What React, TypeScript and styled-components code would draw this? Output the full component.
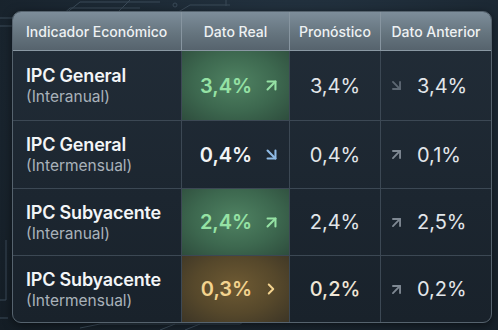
import styled, { createGlobalStyle } from 'styled-components';
import { ArrowUpRight, ArrowDownRight, ChevronRight } from 'lucide-react';

type Tone = 'green' | 'blue' | 'yellow' | 'plain';

interface Row {
  title: string;
  sub: string;
  real: string;
  realTone: Tone;
  realIcon: 'up' | 'down' | 'chev';
  forecast: string;
  prevIcon: 'up' | 'down';
  prev: string;
}

const rows: Row[] = [
  { title: 'IPC General', sub: '(Interanual)', real: '3,4%', realTone: 'green', realIcon: 'up', forecast: '3,4%', prevIcon: 'down', prev: '3,4%' },
  { title: 'IPC General', sub: '(Intermensual)', real: '0,4%', realTone: 'blue', realIcon: 'down', forecast: '0,4%', prevIcon: 'up', prev: '0,1%' },
  { title: 'IPC Subyacente', sub: '(Interanual)', real: '2,4%', realTone: 'green', realIcon: 'up', forecast: '2,4%', prevIcon: 'up', prev: '2,5%' },
  { title: 'IPC Subyacente', sub: '(Intermensual)', real: '0,3%', realTone: 'yellow', realIcon: 'chev', forecast: '0,2%', prevIcon: 'up', prev: '0,2%' },
];

const toneText: Record<Tone, string> = {
  green: '#95e2a4',
  blue: '#f2f4f6',
  yellow: '#f3d38f',
  plain: '#e4e8ec',
};

const toneIcon: Record<Tone, string> = {
  green: '#95e2a4',
  blue: '#8fbbe6',
  yellow: '#f3d38f',
  plain: '#e4e8ec',
};

const toneBg: Record<Tone, string> = {
  green: 'radial-gradient(ellipse at 50% 45%, #4f8262 0%, #3d684f 55%, #2e4d3d 100%)',
  blue: 'transparent',
  yellow: 'radial-gradient(ellipse at 50% 45%, #6e5a33 0%, #56482b 55%, #3c3526 100%)',
  plain: 'transparent',
};

const App = () => {
  return (
    <>
      <GlobalStyle />
      <Page>
        <Circuit width="498" height="330" viewBox="0 0 498 330">
          <g stroke="#3a4a58" strokeWidth="1" fill="none">
            <path d="M0 18 L60 18 L80 2 L160 2" />
            <path d="M0 26 L50 26 L70 8 L140 8" />
            <path d="M118 12 L130 0" />
            <path d="M120 14 L175 14 L190 5 L230 5" />
            <circle cx="175" cy="5" r="2" />
            <path d="M226 0 L226 6" />
            <path d="M0 300 L6 300 L6 240" />
            <path d="M0 318 L8 318" />
            <path d="M80 328 L100 324 L240 324" />
            <path d="M160 330 L175 324" />
            <path d="M185 330 L200 324" />
            <path d="M240 324 L250 318" />
          </g>
        </Circuit>
        <Card>
          <HeadCell $align="left">Indicador Económico</HeadCell>
          <HeadCell>Dato Real</HeadCell>
          <HeadCell>Pronóstico</HeadCell>
          <HeadCell>Dato Anterior</HeadCell>
          {rows.map((r, i) => (
            <RowGroup key={i} $last={i === rows.length - 1}>
              <NameCell>
                <Title>{r.title}</Title>
                <Sub>{r.sub}</Sub>
              </NameCell>
              <RealCell $tone={r.realTone}>
                <RealValue $tone={r.realTone}>{r.real}</RealValue>
                <IconWrap $color={toneIcon[r.realTone]}>
                  {r.realIcon === 'up' && <ArrowUpRight size={19} strokeWidth={2.6} />}
                  {r.realIcon === 'down' && <ArrowDownRight size={19} strokeWidth={2.6} />}
                  {r.realIcon === 'chev' && <ChevronRight size={18} strokeWidth={2.6} />}
                </IconWrap>
              </RealCell>
              <ValueCell>
                <PlainValue $warm={r.realTone === 'yellow'}>{r.forecast}</PlainValue>
              </ValueCell>
              <PrevCell>
                <IconWrap $color={r.prevIcon === 'down' ? '#5d6873' : '#7f8993'}>
                  {r.prevIcon === 'up' ? (
                    <ArrowUpRight size={17} strokeWidth={2.6} />
                  ) : (
                    <ArrowDownRight size={17} strokeWidth={2.6} />
                  )}
                </IconWrap>
                <PlainValue>{r.prev}</PlainValue>
              </PrevCell>
            </RowGroup>
          ))}
        </Card>
      </Page>
    </>
  );
};

const GlobalStyle = createGlobalStyle`
  body {
    margin: 0;
    background: #17222c;
    font-family: Inter, "Noto Sans", sans-serif;
  }
`;

const Page = styled.div`
  position: relative;
  width: 498px;
  height: 330px;
  box-sizing: border-box;
  padding: 11px 6px 7px 12px;
  background: radial-gradient(ellipse at 60% 20%, #243442 0%, #1b2732 55%, #141d25 100%);
  overflow: hidden;
`;

const Circuit = styled.svg`
  position: absolute;
  left: 0;
  top: 0;
`;

const Card = styled.div`
  position: relative;
  display: grid;
  grid-template-columns: 169px 108px 91px 1fr;
  grid-template-rows: 39px 70px 68px 67px 1fr;
  height: 100%;
  border: 1px solid #56636e;
  border-radius: 9px;
  overflow: hidden;
  box-sizing: border-box;
  background: linear-gradient(180deg, #222d38 0%, #1c2630 60%, #19222b 100%);
  box-shadow: 0 2px 10px rgba(0, 0, 0, 0.5);
`;

const HeadCell = styled.div<{ $align?: 'left' }>`
  display: flex;
  align-items: center;
  justify-content: ${(p) => (p.$align === 'left' ? 'flex-start' : 'center')};
  padding-left: ${(p) => (p.$align === 'left' ? '13px' : '0')};
  background: linear-gradient(180deg, #7d8d9a 0%, #66757f 55%, #56636d 100%);
  color: #eef1f3;
  font-size: 14px;
  font-weight: 500;
  border-bottom: 1px solid #8a98a3;
  border-right: 1px solid #8795a0;
  &:nth-child(4) {
    border-right: none;
  }
`;

const RowGroup = styled.div<{ $last: boolean }>`
  display: contents;
  & > div {
    border-bottom: ${(p) => (p.$last ? 'none' : '1px solid #3c4854')};
    border-right: 1px solid #3c4854;
  }
  & > div:last-child {
    border-right: none;
  }
`;

const NameCell = styled.div`
  display: flex;
  flex-direction: column;
  justify-content: center;
  padding-left: 13px;
  gap: 1px;
`;

const Title = styled.div`
  color: #f3f5f7;
  font-size: 18px;
  font-weight: 600;
  letter-spacing: -0.2px;
`;

const Sub = styled.div`
  color: #a9b2ba;
  font-size: 15.5px;
`;

const RealCell = styled.div<{ $tone: Tone }>`
  display: flex;
  align-items: center;
  justify-content: center;
  gap: 10px;
  padding-left: 10px;
  background: ${(p) => toneBg[p.$tone]};
`;

const RealValue = styled.span<{ $tone: Tone }>`
  color: ${(p) => toneText[p.$tone]};
  font-size: 20px;
  font-weight: 600;
`;

const IconWrap = styled.span<{ $color: string }>`
  display: inline-flex;
  color: ${(p) => p.$color};
`;

const ValueCell = styled.div`
  display: flex;
  align-items: center;
  justify-content: center;
`;

const PrevCell = styled.div`
  display: flex;
  align-items: center;
  gap: 12px;
  padding-left: 7px;
`;

const PlainValue = styled.span<{ $warm?: boolean }>`
  color: ${(p) => (p.$warm ? '#efe6d6' : '#e2e6ea')};
  font-size: 20px;
  font-weight: ${(p) => (p.$warm ? 500 : 400)};
`;

export default App;
